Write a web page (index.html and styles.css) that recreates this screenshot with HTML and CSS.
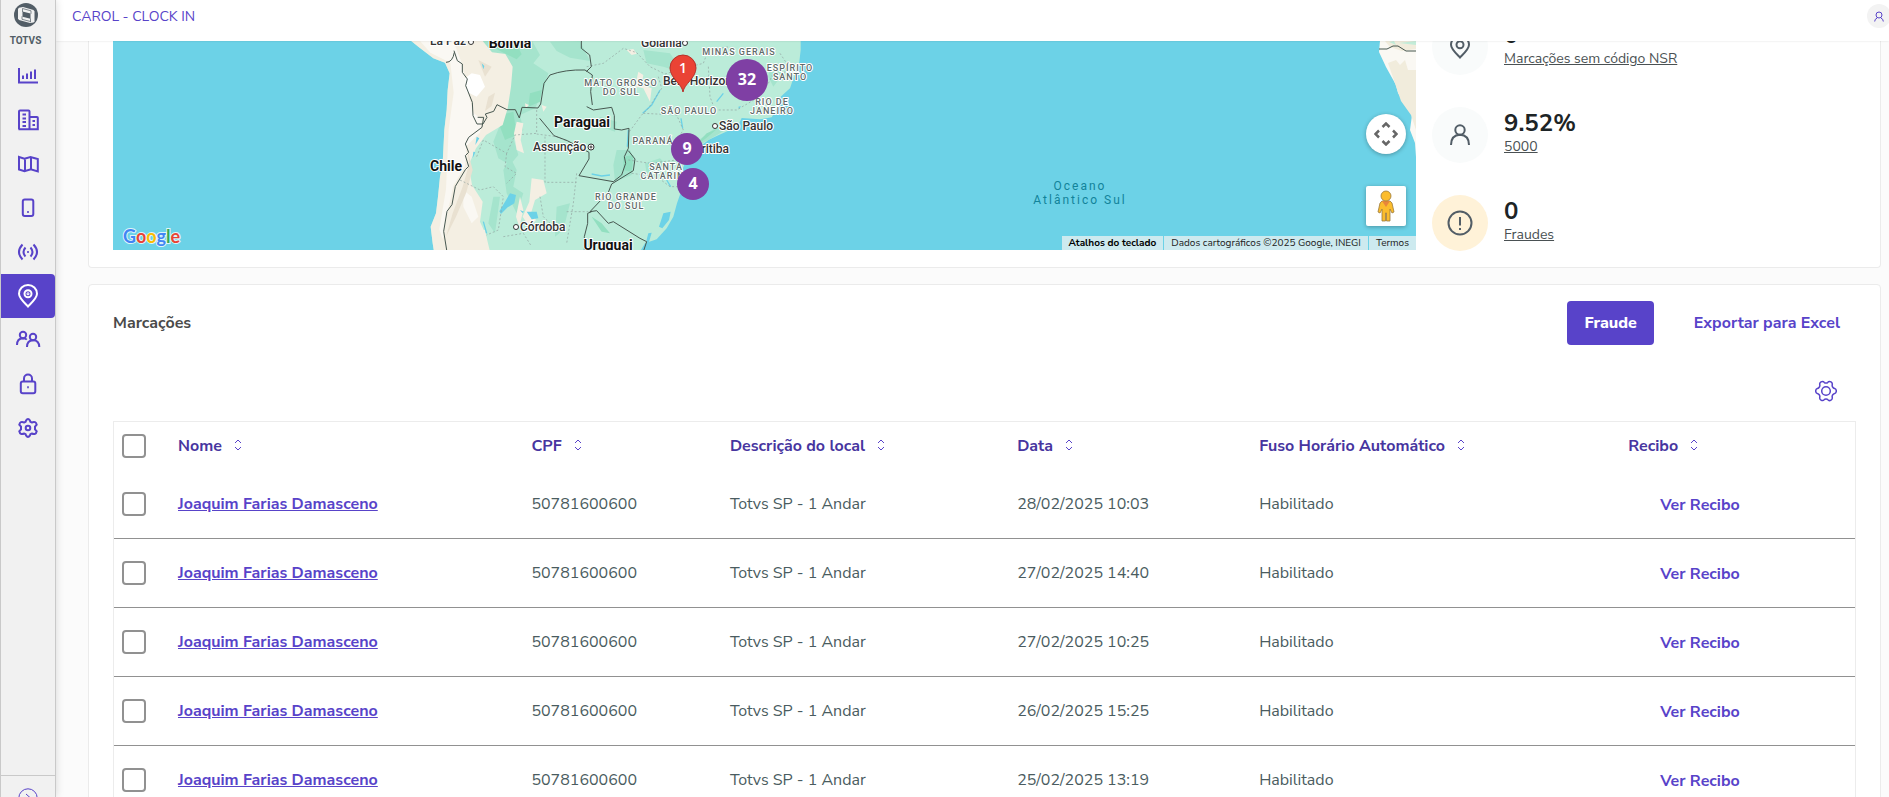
FILE: index.html
```html
<!DOCTYPE html>
<html lang="pt-BR">
<head>
    <meta charset="UTF-8">
    <meta name="viewport" content="width=device-width, initial-scale=1.0">
    <title>CAROL - CLOCK IN</title>
    <link rel="stylesheet" href="styles.css">
</head>
<body>
<div class="app">
    <aside class="sidebar">
        <div class="logo">
            <svg width="24" height="24" viewBox="0 0 24 24">
                <circle cx="12" cy="12" r="12" fill="#525d66"/>
                <path d="M4 6l1-1.200 4-.8 10.500 3 1 1.500v10l-1 1L16 20 5 17l-1-1.500z" fill="#f1f1f1"/>
                <path d="M8.500 8.500l8 2v5.200l-8-2z" fill="#525d66"/>
                <path d="M8.500 9V5.500M16.500 15.500v3.700M8.500 5.500l8.500 2.300v3M16.500 18.500L8 16.300v-3" fill="none" stroke="#525d66" stroke-width=".7"/>
            </svg>
            <span>TOTVS</span>
        </div>
        <nav class="menu">
            <a href="#" aria-label="Dashboard"><svg width="22" height="22" viewBox="0 0 22 22"><path d="M2 3v14.500h19M6 14v-3.500M10 14V8.500M14 14V6.500M18 14V4.500"/></svg></a>
            <a href="#" aria-label="Empresas"><svg width="22" height="22" viewBox="0 0 22 22"><path d="M2 20.200V2.500q0-1 1-1h8.500q1 0 1 1v17.700M12.500 8H20q.8 0 .8.800v11.400H1.500M5.500 5.500H9M5.500 9.500H9M5.500 13H9M5.500 17H9M15.500 12h2.500M15.500 16h2.500"/></svg></a>
            <a href="#" aria-label="Mapa"><svg width="22" height="22" viewBox="0 0 22 22"><path d="M2 4l5.500 1.800L13.500 4l7.300 2v12.500l-7-2.200-6.300 2L2 16.500zM8 5.500v13M14 4v12.500"/></svg></a>
            <a href="#" aria-label="Dispositivos"><svg width="22" height="22" viewBox="0 0 22 22"><rect x="5.800" y="2.500" width="10.500" height="16.500" rx="2"/><path d="M10.200 15h1.600"/></svg></a>
            <a href="#" aria-label="Sinal"><svg width="22" height="22" viewBox="0 0 22 22"><path d="M5.500 3.500q-7 7.500 0 15M8.500 6.500q-4 4.500 0 9M16.500 3.500q7 7.500 0 15M13.500 6.500q4 4.500 0 9M10.200 11h1.600"/></svg></a>
            <a href="#" class="active" aria-label="Marcações"><svg width="22" height="24" viewBox="0 0 22 24"><path d="M11 22.500C6 17.500 2 14 2 9.800a9 8.800 0 0 1 18 0c0 4.200-4 7.700-9 12.700z"/><circle cx="11" cy="9.800" r="3.500"/><circle cx="11" cy="9.800" r=".5"/></svg></a>
            <a href="#" aria-label="Colaboradores"><svg width="26" height="22" viewBox="0 0 26 22"><circle cx="8" cy="6" r="3.200"/><circle cx="18" cy="8" r="3.200"/><path d="M2 16q0-6.500 6-6.700 2.500 0 3.800 1.300M12 18q0-6.500 6-6.700t6.300 6.700"/></svg></a>
            <a href="#" aria-label="Segurança"><svg width="22" height="22" viewBox="0 0 22 22"><rect x="3.800" y="8.500" width="14.500" height="11.700" rx="2"/><path d="M7 8.500V5.500a4 4 0 0 1 8 0v3M10.200 14.300h1.600"/></svg></a>
            <a href="#" aria-label="Configurações"><svg width="22" height="22" viewBox="0 0 22 22"><path d="M9 3.600q2-3.200 4 0l.4 1.200 1.300.7q4.200-1.700 5 2.200l-1.700 2v2.600l1.700 2q-.8 3.900-5 2.200l-1.300.7-.4 1.200q-2 3.200-4 0l-.4-1.200-1.300-.7q-4.200 1.700-5-2.200l1.700-2V9.700l-1.700-2q.8-3.900 5-2.200l1.300-.7z"/><circle cx="11" cy="11" r="2.300"/></svg></a>
        </nav>
        <button class="expand" aria-label="Expandir menu">
            <svg width="20" height="20" viewBox="0 0 20 20"><circle cx="10" cy="10" r="9.200"/><path d="M8 6l4.500 4L8 14"/></svg>
        </button>
    </aside>

    <div class="page">
        <header class="topbar">
            <a href="#">CAROL - CLOCK IN</a>
            <button class="avatar" aria-label="Perfil">
                <svg width="10" height="11" viewBox="0 0 10 11"><circle cx="5" cy="4" r="3"/><path d="M.7 10.500q0-2.500 2.300-3.300M9.300 10.500q0-2.500-2.300-3.300"/></svg>
            </button>
        </header>

        <main class="content">
            <section class="card overview">
                <div class="map">
                    <svg class="map-canvas" viewBox="0 0 1303 209" preserveAspectRatio="xMidYMid slice">
                        <!-- South America -->
                        <g transform="translate(297 -11) scale(.333333)">
                            <path fill="#bbecd9" d="M0 30L25 50 70 85 105 98 119 130 113 180 110 240 103 300 98 400 90 440 84 500 78 550 62 590 68 640 72 665H690L705 640 740 628 770 595 790 560 801 520 815 480 808 440 825 400 838 372 870 350 895 330 925 316 960 300 985 285 995 264 1050 268 1085 262 1105 230 1112 200 1140 175 1150 145 1168 95 1172 60V30z"/>
                            <path fill="#a5e4cd" d="M195 30h170l25 45-20 25 45 30-18 60-22 45-45 20 10 45-30 25 15 50-25 30-35-20-15-50 20-50-10-80-5-80-40-20-30-40zM420 35l90-2 30 60-60-10-40-20zM620 360l40 0 15 30-10 45-50 20-5-50zM700 60l80 10 40 60-60-20-50-10zM880 320l40-30 50-5-40 25-70 40-20 25-10-20zM300 380l20 40-10 50 30 20-20 60-30-60-10-70zM570 260l50 15-5 30-55-20zM1080 110l40 20-30 40-15-30zM440 530l40-10-20 80-25 20zM705 400l45-15 20 20-60 25zM250 500l20 0-15 110-20-30z"/>
                            <path fill="#92dfc0" d="M235 33l80 0 20 40-15 15-60-30zM275 255l35-10 10 70-35 15-15-40zM360 190l35-10-5 35-35 15zM640 380l30-5-5 50-25-5zM890 310l30-12-30 25-40 30zM545 560l30 20 25 30-25-5z"/>
                            <path fill="#f4efe3" d="M0 30L25 50 70 85 105 98 119 130 113 180 110 240 103 300 98 400 90 440 84 500 78 550 62 590 68 640 72 665H240l-12-50-18-40 8-60-32-50-10-60 22-50 30-40 50-30 15-50 10-65 5-60-22-38-40-5-25-30-35-55z"/>
                            <path fill="#faf8f3" d="M30 33h100l25 65 15 70 20 80 25 20-5 40-40 40-5 60-35 60-20 90-12 70-10-30 20-120 8-180 15-110-10-90-60-30zM160 480l25 20 20 60-20 20-25-50z"/>
                            <path fill="#fff" d="M185 130l25 5 15 35-25 30-30-15-5-40z"/>
                            <path fill="#f4efe3" d="M320 275l20 5-8 50 10 40-22-10-8-50zM365 445l35 5 10 40-35 20-12 40 15 20-20 20-20-30 20-45zM330 500l10 40-12 50-10-30zM685 125l15 10-5 30 30 10-5 40-20-40-25-5zM650 60l20-3 10 14-15 4zM395 225l15 5-10 15zM345 220l12 5-10 10zM180 600l45 0 10 60h-40z"/>
                            <path fill="#e9e1d1" d="M170 350l8 50-20 70-30 80-20 70 30-60 30-70 20-70zM205 90l40 20-20 30zM235 200l20-12-10 40-20 15z"/>
                            <path fill="#6cd2e7" d="M300 490l18 5-5 25-20 12-20 20-5-8 18-30zM350 545h30l5 20-20 3zM760 550l22-5-5 25-20 25-10-5zM715 610l10-2-10 35-10 5zM200 320l8 5-12 20zM190 365l6 2-8 18zM215 100l8 8-3 10zM330 540l12 5-5 4zM985 230l8-2-6 10z"/>
                            <path fill="none" stroke="#6cd2e7" stroke-width="4" d="M750 180L725 225 698 250M655 300L652 350M545 432L575 438 600 435M940 190L920 215M813 265l5 30M770 450L782 470M220 575l10 35"/>
                            <path fill="none" stroke="#91a29e" stroke-width="2" stroke-dasharray="6 6" d="M530 110L580 100 640 55 680 68 720 110 765 132 840 110 880 100 895 60 960 50M745 140L755 175 715 235 695 255 658 305M700 250L800 255 820 300 800 330M895 110L900 200 915 240 980 240 1040 205 1075 160 1090 130M380 240L380 310 315 315 290 370 220 330 200 380M380 312L440 320 500 345M405 320V457H500M500 430L490 520 470 640M470 545L535 545M150 450L210 480 250 470 280 500 265 600 230 615M290 370L285 410 320 430 290 460M280 620L340 610 365 650M655 390L720 400 800 390M665 430L740 440 780 470 805 470M390 500L400 560 440 600M1110 70L1130 100 1120 150"/>
                            <path fill="none" stroke="#46564f" stroke-width="3" stroke-linejoin="round" d="M108 97q20 0 25-30M132 62l10 30 15 10 0 25 15 20-5 20 20 50 2 40 12 25h18l12-20-5-10 25-8 10-20 30 15 25 0 12 25 8-32 48 2 8-12 10-62 18-25q45-17 105-15l22 15-5 50 5 40M514 30l0 25 25 20 5 35-15 15M530 230l20 10 55-8 8 25v40l22 3 22-5-2 60-12 25 4 20-12 35-25 20-103-18 30-50 0-20-65-35-40-15-43-52M655 362l20 25-5 35-65 40-10 25-55 58 20-3 35 38 15-5 80 50 20 10-10 30M545 545l-12 5 0 30-10 40 0 40M203 262l18 0-5 30-40 30-10 20 10 25-10 10 10 32-10 10-30 50-10 55-15 20-10 60 12 75"/>
                        </g>
                        <!-- Africa -->
                        <path fill="#faf8f3" d="M1267 0l-1 11 7 15 10 18 2 8 14 22-2 15 5 13 1 14V0z"/>
                        <path fill="#f1ecdc" d="M1275 22l8-3 4 5 5-5 3 10h8v60l-5-15-10-14zM1272 0h31v8l-14 2-12-4z"/>
                        <path fill="#c3ecd9" d="M1276 1l5-1 2 4zM1286 2l17-2v4z"/>
                        <path fill="none" stroke="#46564f" d="M1266 8l8 0 6-3 5 0 8 5h10"/>
                        <!-- Labels -->
                        <g class="region">
                            <text x="626" y="14">MINAS GERAIS</text>
                            <text x="677" y="30">ESPÍRITO</text><text x="677" y="39">SANTO</text>
                            <text x="508" y="45">MATO GROSSO</text><text x="508" y="54">DO SUL</text>
                            <text x="659" y="64">RIO DE</text><text x="659" y="73">JANEIRO</text>
                            <text x="576" y="73">SÃO PAULO</text>
                            <text x="540" y="103">PARANÁ</text>
                            <text x="553" y="129">SANTA</text><text x="553" y="138">CATARINA</text>
                            <text x="513" y="159">RIO GRANDE</text><text x="513" y="168">DO SUL</text>
                        </g>
                        <g class="city">
                            <text x="317" y="4">La Paz</text><text x="528" y="6">Goiânia</text>
                            <text x="550" y="44">Belo Horizonte</text><text x="606" y="89">São Paulo</text>
                            <text x="574" y="112">Curitiba</text><text x="420" y="110">Assunção</text><text x="407" y="190">Córdoba</text>
                        </g>
                        <g class="dot">
                            <circle cx="358" cy="1" r="2.500"/><circle cx="572" cy="2" r="2.500"/><circle cx="602" cy="85" r="2.500"/>
                            <circle cx="478" cy="106" r="3"/><circle cx="478" cy="106" r="1"/><circle cx="403" cy="186" r="2.500"/>
                        </g>
                        <g class="country">
                            <text x="397" y="7">Bolívia</text><text x="469" y="86">Paraguai</text>
                            <text x="333" y="130">Chile</text><text x="495" y="209">Uruguai</text>
                        </g>
                        <g class="ocean">
                            <text x="967" y="149">Oceano</text><text x="967" y="163">Atlântico Sul</text>
                        </g>
                        <!-- Markers -->
                        <path d="M570 51c-1-8-13-14-13-24a13 13 0 0 1 26 0c0 10-12 16-13 24z" fill="#ea4335" stroke="#b6312a"/>
                        <g fill="#7f3fa4"><circle cx="634" cy="39" r="21"/><circle cx="574" cy="108" r="16"/><circle cx="580" cy="143" r="16"/></g>
                        <g class="count">
                            <text x="570" y="32" class="single">1</text><text x="634" y="44">32</text>
                            <text x="574" y="113">9</text><text x="580" y="148">4</text>
                        </g>
                    </svg>
                    <svg class="google" width="60" height="24" viewBox="0 0 60 24" aria-label="Google">
                        <text x="1" y="17"><tspan fill="#4285f4">G</tspan><tspan fill="#ea4335">o</tspan><tspan fill="#fbbc04">o</tspan><tspan fill="#4285f4">g</tspan><tspan fill="#34a853">l</tspan><tspan fill="#ea4335">e</tspan></text>
                    </svg>
                    <div class="map-controls">
                        <button class="pan" aria-label="Controles da câmera">
                            <svg width="24" height="24" viewBox="0 0 24 24"><path d="M8.500 5L12 1.500 15.500 5M8.500 19l3.500 3.500 3.500-3.500M5 8.500L1.500 12 5 15.500M19 8.500l3.500 3.500-3.500 3.500" fill="none" stroke="#666" stroke-width="2.500"/></svg>
                        </button>
                        <button class="pegman" aria-label="Street View">
                            <svg width="18" height="32" viewBox="0 0 18 32"><path d="M5 11h8l2 2 2 9-2 1-2-4v12H9.500v-8h-1v8H5V19l-2 4-2-1 2-9z" fill="#fbbc2d" stroke="#9b7a3c" stroke-width=".8"/><path d="M5 11h8l-4 6z" fill="#e8863a"/><circle cx="9" cy="6" r="5" fill="#fbbc2d" stroke="#9b7a3c" stroke-width=".8"/></svg>
                        </button>
                    </div>
                    <div class="attribution">
                        <button>Atalhos do teclado</button>
                        <span>Dados cartográficos ©2025 Google, INEGI</span>
                        <a href="#">Termos</a>
                    </div>
                </div>

                <div class="stats">
                    <div class="stat">
                        <div class="stat-icon"><svg width="22" height="24" viewBox="0 0 22 24"><path d="M11 22.500C6 17.500 2 14 2 9.800a9 8.800 0 0 1 18 0c0 4.200-4 7.700-9 12.700z"/><circle cx="11" cy="9.800" r="3.500"/></svg></div>
                        <div><strong>0</strong><a href="#">Marcações sem código NSR</a></div>
                    </div>
                    <div class="stat">
                        <div class="stat-icon"><svg width="22" height="22" viewBox="0 0 22 22"><circle cx="11" cy="6" r="4.700"/><path d="M2 21q0-10 9-10.300 9 .3 9 10.300"/></svg></div>
                        <div><strong>9.52%</strong><a href="#">5000</a></div>
                    </div>
                    <div class="stat">
                        <div class="stat-icon warning"><svg width="26" height="26" viewBox="0 0 26 26"><circle cx="13" cy="13" r="11.500"/><path d="M13 7v8.500M13 18v2"/></svg></div>
                        <div><strong>0</strong><a href="#">Fraudes</a></div>
                    </div>
                </div>
            </section>

            <section class="card records">
                <div class="card-header">
                    <h2>Marcações</h2>
                    <div class="actions">
                        <button class="btn primary">Fraude</button>
                        <button class="btn">Exportar para Excel</button>
                    </div>
                </div>
                <div class="table-tools">
                    <button class="tool" aria-label="Configurar colunas">
                        <svg width="22" height="22" viewBox="0 0 22 22"><path d="M6 1.900q2-1.200 3.300.5.500.6 1.700.6t1.700-.6Q14 .7 16 1.900q1.700 1 1.200 3-.3 1.600.9 2.700.7.700 1.600.9 1.600.5 1.600 2.500t-1.600 2.500q-.9.200-1.600.9-1.200 1.100-.9 2.700.5 2-1.200 3-2 1.200-3.300-.5-.5-.6-1.700-.6t-1.700.6Q8 21.300 6 20.100q-1.700-1-1.200-3 .3-1.600-.9-2.700-.7-.7-1.600-.9Q.7 13 .7 11t1.600-2.500q.9-.2 1.600-.9 1.200-1.100.9-2.700-.5-2 1.200-3z"/><circle cx="11" cy="11" r="4.300"/></svg>
                    </button>
                </div>
                <table>
                    <colgroup><col class="c-check"><col class="c-name"><col class="c-cpf"><col class="c-place"><col class="c-date"><col class="c-zone"><col></colgroup>
                    <thead>
                        <tr>
                            <th><input type="checkbox" aria-label="Selecionar todos"></th>
                            <th>Nome <svg class="sort" viewBox="0 0 8 12"><path d="M1 4l3-3 3 3M1 8l3 3 3-3"/></svg></th>
                            <th>CPF <svg class="sort" viewBox="0 0 8 12"><path d="M1 4l3-3 3 3M1 8l3 3 3-3"/></svg></th>
                            <th>Descrição do local <svg class="sort" viewBox="0 0 8 12"><path d="M1 4l3-3 3 3M1 8l3 3 3-3"/></svg></th>
                            <th>Data <svg class="sort" viewBox="0 0 8 12"><path d="M1 4l3-3 3 3M1 8l3 3 3-3"/></svg></th>
                            <th>Fuso Horário Automático <svg class="sort" viewBox="0 0 8 12"><path d="M1 4l3-3 3 3M1 8l3 3 3-3"/></svg></th>
                            <th>Recibo <svg class="sort" viewBox="0 0 8 12"><path d="M1 4l3-3 3 3M1 8l3 3 3-3"/></svg></th>
                        </tr>
                    </thead>
                    <tbody>
                        <tr>
                            <td><input type="checkbox" aria-label="Selecionar marcação"></td>
                            <td><a href="#">Joaquim Farias Damasceno</a></td>
                            <td>50781600600</td>
                            <td>Totvs SP - 1 Andar</td>
                            <td>28/02/2025 10:03</td>
                            <td>Habilitado</td>
                            <td><button class="btn">Ver Recibo</button></td>
                        </tr>
                        <tr>
                            <td><input type="checkbox" aria-label="Selecionar marcação"></td>
                            <td><a href="#">Joaquim Farias Damasceno</a></td>
                            <td>50781600600</td>
                            <td>Totvs SP - 1 Andar</td>
                            <td>27/02/2025 14:40</td>
                            <td>Habilitado</td>
                            <td><button class="btn">Ver Recibo</button></td>
                        </tr>
                        <tr>
                            <td><input type="checkbox" aria-label="Selecionar marcação"></td>
                            <td><a href="#">Joaquim Farias Damasceno</a></td>
                            <td>50781600600</td>
                            <td>Totvs SP - 1 Andar</td>
                            <td>27/02/2025 10:25</td>
                            <td>Habilitado</td>
                            <td><button class="btn">Ver Recibo</button></td>
                        </tr>
                        <tr>
                            <td><input type="checkbox" aria-label="Selecionar marcação"></td>
                            <td><a href="#">Joaquim Farias Damasceno</a></td>
                            <td>50781600600</td>
                            <td>Totvs SP - 1 Andar</td>
                            <td>26/02/2025 15:25</td>
                            <td>Habilitado</td>
                            <td><button class="btn">Ver Recibo</button></td>
                        </tr>
                        <tr>
                            <td><input type="checkbox" aria-label="Selecionar marcação"></td>
                            <td><a href="#">Joaquim Farias Damasceno</a></td>
                            <td>50781600600</td>
                            <td>Totvs SP - 1 Andar</td>
                            <td>25/02/2025 13:19</td>
                            <td>Habilitado</td>
                            <td><button class="btn">Ver Recibo</button></td>
                        </tr>
                    </tbody>
                </table>
            </section>
        </main>
    </div>
</div>
</body>
</html>
```

FILE: styles.css
```css
* {
    box-sizing: border-box;
}

body {
    margin: 0;
    font-family: "Nunito Sans", "Open Sans", sans-serif;
    font-size: 16px;
    color: #4a5c60;
    background-color: #fbfbfb;
}

button {
    font: inherit;
    border: none;
    background: none;
    padding: 0;
    cursor: pointer;
}

svg {
    display: block;
    flex: none;
}

.app {
    display: flex;
    height: 100vh;
    overflow: hidden;
}

/* Sidebar */
.sidebar {
    display: flex;
    flex-direction: column;
    flex: none;
    width: 56px;
    background-color: #f1f1f1;
    border-left: 1px solid #c9c9c9;
    border-right: 1px solid #c9c9c9;
    box-shadow: 0 0 8px rgba(0,0,0,0.15);
    z-index: 2;
}

.logo {
    display: flex;
    flex-direction: column;
    align-items: center;
    gap: 8px;
    height: 54px;
    padding: 3px 5px 0 0;
    font: bold 10px/12px Roboto, sans-serif;
    color: #525d66;
}

.menu {
    display: flex;
    flex-direction: column;
    flex: 1;
}

.menu a {
    display: flex;
    align-items: center;
    justify-content: center;
    height: 44px;
}

.menu svg, .expand svg {
    fill: none;
    stroke: #5843c9;
    stroke-width: 2;
}

.menu .active {
    background-color: #5843c9;
    border-radius: 0 4px 4px 0;
}

.menu .active svg {
    stroke: #fff;
    stroke-width: 2;
}

.expand {
    display: flex;
    justify-content: center;
    height: 22px;
    padding-top: 12px;
    border-top: 1px solid #c9c9c9;
}

.expand svg {
    stroke-width: 1;
}

/* Page */
.page {
    display: flex;
    flex-direction: column;
    flex: 1;
    min-width: 0;
}

.topbar {
    display: flex;
    align-items: center;
    justify-content: space-between;
    flex: none;
    height: 41px;
    padding: 0 0 9px 16px;
    background-color: #fff;
    box-shadow: 0 0 2px rgba(0,0,0,0.12);
    z-index: 1;
}

.topbar a {
    color: #5843c9;
    font-size: 14px;
    text-decoration: none;
}

.avatar {
    display: flex;
    align-items: center;
    justify-content: center;
    width: 24px;
    height: 24px;
    margin-right: -2px;
    border-radius: 50%;
    background-color: #f3f3f3;
}

.avatar svg {
    fill: none;
    stroke: #5843c9;
}

.content {
    flex: 1;
    overflow: hidden;
    padding: 0 8px 0 32px;
}

.card {
    background-color: #fff;
    border: 1px solid #ebebeb;
    border-radius: 4px;
    padding: 16px 24px;
}

.overview {
    display: flex;
    gap: 16px;
    height: 227px;
    padding-top: 0;
    border-top: none;
    border-radius: 0 0 4px 4px;
}

/* Map */
.map {
    position: relative;
    flex: 1;
    height: 209px;
    background-color: #6cd2e7;
    overflow: hidden;
}

.map-canvas {
    width: 100%;
    height: 100%;
    font-family: Roboto, sans-serif;
}

.map-canvas text {
    paint-order: stroke;
    stroke: #fff;
    stroke-width: 2px;
    stroke-linejoin: round;
    text-anchor: middle;
}

.region {
    font-size: 9px;
    font-weight: 500;
    letter-spacing: 1px;
    fill: #5f6b6a;
}

.city {
    font-size: 12px;
    font-weight: 500;
    fill: #333;
}

.map-canvas .city text {
    text-anchor: start;
}

.dot {
    fill: #fff;
    stroke: #333;
}

.country {
    font-size: 14px;
    font-weight: bold;
    fill: #111;
}

.ocean {
    font-size: 12px;
    letter-spacing: 2px;
    fill: #12839a;
}

.map-canvas .ocean text, .map-canvas .count text {
    stroke: none;
}

.count {
    font-family: "Open Sans", sans-serif;
    font-size: 16px;
    font-weight: bold;
    fill: #fff;
}

.count .single {
    font-size: 14px;
    font-weight: 600;
}

.google {
    position: absolute;
    left: 9px;
    bottom: 0;
    font: bold 18px Lato, sans-serif;
    paint-order: stroke;
    stroke: rgba(255,255,255,0.8);
    stroke-width: 2px;
}

.map-controls {
    position: absolute;
    right: 10px;
    bottom: 24px;
    display: flex;
    flex-direction: column;
    gap: 32px;
}

.map-controls button {
    display: flex;
    align-items: center;
    justify-content: center;
    width: 40px;
    height: 40px;
    background-color: #fff;
    border-radius: 2px;
    box-shadow: 0 1px 4px rgba(0,0,0,0.3);
}

.map-controls .pan {
    border-radius: 50%;
}

.attribution {
    position: absolute;
    right: 0;
    bottom: 0;
    display: flex;
    gap: 1px;
    font-size: 10px;
    line-height: 14px;
    color: #111;
}

.attribution > * {
    padding: 0 7px;
    background-color: #cdeaef;
    color: #222;
    text-decoration: none;
}

.attribution button {
    color: #000;
    font-weight: bold;
}

/* Stats */
.stats {
    display: flex;
    flex-direction: column;
    justify-content: flex-end;
    gap: 32px;
    flex: none;
    width: 424px;
    height: 210px;
    overflow: hidden;
}

.stat {
    display: flex;
    gap: 16px;
    height: 56px;
    flex: none;
}

.stat-icon {
    display: flex;
    align-items: center;
    justify-content: center;
    width: 56px;
    height: 56px;
    border-radius: 50%;
    background-color: #f9fbfb;
}

.stat-icon.warning {
    background-color: #fff2d8;
}

.stat svg {
    fill: none;
    stroke: #525d66;
    stroke-width: 2;
}

.stat strong {
    display: block;
    font-size: 24px;
    line-height: 32px;
    color: #1d2426;
}

.stat a {
    display: block;
    font-size: 14px;
    line-height: 16px;
    color: #4a5153;
}

/* Records */
.records {
    margin-top: 16px;
}

.card-header {
    display: flex;
    align-items: center;
    justify-content: space-between;
}

.card-header h2 {
    margin: 0;
    font-size: 16px;
    font-weight: bold;
    color: #4a4a4a;
}

.actions {
    display: flex;
    gap: 24px;
}

.btn {
    height: 44px;
    padding: 0 16px;
    border-radius: 4px;
    color: #5843c9;
    font-weight: bold;
}

.btn.primary {
    background-color: #5843c9;
    color: #fff;
    font-weight: 800;
    padding: 0 17px;
}

.table-tools {
    display: flex;
    justify-content: flex-end;
    padding: 24px 8px 8px;
}

.tool {
    display: flex;
    align-items: center;
    justify-content: center;
    width: 44px;
    height: 44px;
}

.tool svg {
    fill: none;
    stroke: #5843c9;
    stroke-width: 1.5;
}

table {
    width: 100%;
    table-layout: fixed;
    border-collapse: separate;
    border-spacing: 0;
    border: 1px solid #ececec;
}

.c-check { width: 48px; }
.c-name { width: 20.3%; }
.c-cpf { width: 11.4%; }
.c-place { width: 16.5%; }
.c-date { width: 13.9%; }
.c-zone { width: 21.2%; }

th {
    height: 48px;
    padding: 0 16px;
    text-align: left;
    font-weight: bold;
    color: #47359f;
    white-space: nowrap;
}

td {
    height: 69px;
    padding: 0 16px;
    border-bottom: 1px solid #919191;
    white-space: nowrap;
}

th:first-child, td:first-child {
    padding: 0 8px;
}

td:last-child {
    padding: 2px 0 0 32px;
}

td a {
    color: #5843c9;
    font-weight: bold;
}

.sort {
    display: inline-block;
    width: 8px;
    height: 12px;
    margin-left: 8px;
    fill: none;
    stroke: #5843c9;
}

input[type="checkbox"] {
    appearance: none;
    display: block;
    width: 24px;
    height: 24px;
    margin: 0;
    border: 2px solid #919191;
    border-radius: 4px;
    background-color: #fff;
}
```
